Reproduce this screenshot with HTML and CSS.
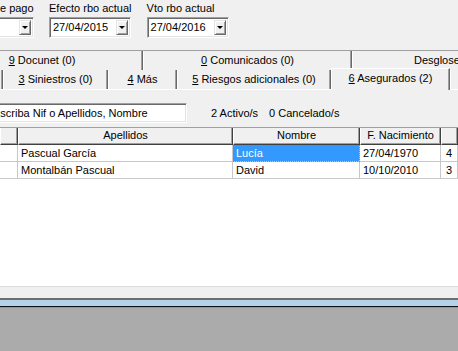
FILE: index.html
```html
<!DOCTYPE html>
<html lang="es">

<head>
    <meta charset="UTF-8">
    <meta name="viewport" content="width=device-width, initial-scale=1.0">
    <title>Asegurados</title>
    <link rel="stylesheet" href="styles.css">
</head>

<body>
    <div class="fields">
        <div class="field field-cut">
            <span class="label">Forma de pago</span>
            <div class="combo combo-pago"><span class="value"></span><span class="arrow"><i></i></span></div>
        </div>
        <div class="field">
            <span class="label">Efecto rbo actual</span>
            <div class="combo"><span class="value">27/04/2015</span><span class="arrow"><i></i></span></div>
        </div>
        <div class="field">
            <span class="label">Vto rbo actual</span>
            <div class="combo"><span class="value">27/04/2016</span><span class="arrow"><i></i></span></div>
        </div>
    </div>

    <div class="tabs">
        <div class="tab-row row-back">
            <div class="tab t-docunet"><u>9</u> Docunet (0)</div>
            <div class="tab t-comunicados"><u>0</u> Comunicados (0)</div>
            <div class="tab t-desglose">Desglose</div>
        </div>
        <div class="tab-row row-front">
            <div class="tab t-hidden"></div>
            <div class="tab t-siniestros"><u>3</u> Siniestros (0)</div>
            <div class="tab t-mas"><u>4</u> Más</div>
            <div class="tab t-riesgos"><u>5</u> Riesgos adicionales (0)</div>
            <div class="tab t-asegurados active"><u>6</u> Asegurados (2)</div>
            <div class="tab t-rest"></div>
        </div>
    </div>

    <div class="panel">
        <div class="search-row">
            <div class="search">Escriba Nif o Apellidos, Nombre</div>
            <div class="counts"><span>2 Activo/s</span><span>0 Cancelado/s</span></div>
        </div>

        <div class="grid">
            <div class="grid-row head">
                <div class="cell"></div>
                <div class="cell">Apellidos</div>
                <div class="cell">Nombre</div>
                <div class="cell">F. Nacimiento</div>
                <div class="cell"></div>
            </div>
            <div class="grid-row">
                <div class="cell"></div>
                <div class="cell">Pascual García</div>
                <div class="cell sel">Lucía</div>
                <div class="cell">27/04/1970</div>
                <div class="cell num">4</div>
            </div>
            <div class="grid-row">
                <div class="cell"></div>
                <div class="cell">Montalbán Pascual</div>
                <div class="cell">David</div>
                <div class="cell">10/10/2010</div>
                <div class="cell num">3</div>
            </div>
        </div>
    </div>

    <div class="status"></div>
    <div class="splitter"></div>
    <div class="desk"></div>
</body>

</html>
```

FILE: styles.css
```css
body {
    margin: 0;
    background-color: #f0f0f0;
    font-family: "Liberation Sans", Arial, sans-serif;
    font-size: 11px;
    color: #000;
    height: 351px;
    overflow: hidden;
}

/* top fields */
.fields {
    display: flex;
    gap: 15px;
    height: 50px;
    padding-top: 2px;
    box-sizing: border-box;
    white-space: nowrap;
}

.field {
    display: flex;
    flex-direction: column;
}

.field-cut {
    margin-left: -41px;
}

.label {
    line-height: 13px;
    margin-bottom: 2px;
}

.combo {
    width: 82px;
    height: 21px;
    box-sizing: border-box;
    display: flex;
    background-color: #fff;
    border: 1px solid;
    border-color: #a0a0a0 #fff #fff #a0a0a0;
    box-shadow: inset 1px 1px #696969, inset -1px -1px #e3e3e3;
    padding: 2px;
}

.combo-pago {
    width: 75px;
}

.value {
    flex: 1;
    line-height: 15px;
    padding-left: 1px;
}

.arrow {
    width: 12px;
    box-sizing: border-box;
    background-color: #f0f0f0;
    border: 1px solid;
    border-color: #e3e3e3 #696969 #696969 #e3e3e3;
    box-shadow: inset 1px 1px #fff, inset -1px -1px #a0a0a0;
    display: flex;
    align-items: center;
    justify-content: center;
}

.arrow i {
    width: 0;
    height: 0;
    border-left: 3px solid transparent;
    border-right: 3px solid transparent;
    border-top: 3px solid #000;
}

/* tabs */
.tabs {
    border-top: 1px solid #a0a0a0;
}

.tab-row {
    display: flex;
    height: 19px;
    white-space: nowrap;
}

.row-back {
    margin-left: -59px;
}

.row-front {
    margin-left: -57px;
}

.tab {
    flex: none;
    box-sizing: border-box;
    border-left: 1px solid #fff;
    border-right: 1px solid #696969;
    box-shadow: inset -1px 0 #a0a0a0;
    text-align: center;
    line-height: 13px;
    padding-top: 3px;
    overflow: hidden;
}

.t-docunet { width: 202px; }
.t-comunicados { width: 209px; }
.t-desglose { width: 209px; text-align: left; padding-left: 61px; }
.t-hidden { width: 60px; }
.t-siniestros { width: 105px; }
.t-mas { width: 69px; }
.t-riesgos { width: 154px; }
.t-asegurados { width: 119px; }
.t-rest { width: 60px; }

.active {
    position: relative;
    z-index: 1;
    margin-top: -2px;
    height: 22px;
    background-color: #f0f0f0;
    border-top: 1px solid #fff;
    padding-top: 3px;
}

/* panel */
.panel {
    border-top: 1px solid #fff;
}

.search-row {
    display: flex;
    align-items: center;
    margin-top: 13px;
    white-space: nowrap;
}

.search {
    width: 199px;
    height: 20px;
    margin-left: -12px;
    box-sizing: border-box;
    background-color: #fff;
    border: 1px solid;
    border-color: #a0a0a0 #fff #fff #a0a0a0;
    box-shadow: inset 1px 1px #696969, inset -1px -1px #e3e3e3;
    padding-left: 4px;
    line-height: 18px;
    overflow: hidden;
}

.counts {
    margin-left: 24px;
    display: flex;
    gap: 11px;
}

/* grid */
.grid {
    margin-top: 4px;
    height: 160px;
    box-sizing: border-box;
    background-color: #fff;
    border-bottom: 1px solid #dcdcdc;
}

.grid-row {
    display: grid;
    grid-template-columns: 18px 215px 127px 81px 1fr;
    height: 17px;
}

.cell {
    box-sizing: border-box;
    border-right: 1px solid #c8c8c8;
    border-bottom: 1px solid #c8c8c8;
    padding-left: 3px;
    line-height: 16px;
    white-space: nowrap;
    overflow: hidden;
}

.head {
    height: 18px;
    border-top: 1px solid #a0a0a0;
    box-sizing: border-box;
}

.head .cell {
    background-color: #f0f0f0;
    border-left: 1px solid #fff;
    border-right: 1px solid #404040;
    border-bottom: 1px solid #404040;
    box-shadow: inset -1px -1px #a0a0a0;
    text-align: center;
    padding-left: 0;
    line-height: 15px;
}

.sel {
    background-color: #3399ff;
    color: #fff;
    outline: 1px dotted #d07010;
    outline-offset: -1px;
}

.num {
    padding-left: 5px;
}

/* bottom */
.status {
    height: 11px;
}

.splitter {
    height: 6px;
    background-color: #b4d3eb;
    border-top: 2px solid #6e6e6e;
    border-bottom: 1px solid #111;
    box-shadow: 0 1px #22c0dc;
}

.desk {
    height: 60px;
    margin-top: 1px;
    background-color: #ababab;
}
```
